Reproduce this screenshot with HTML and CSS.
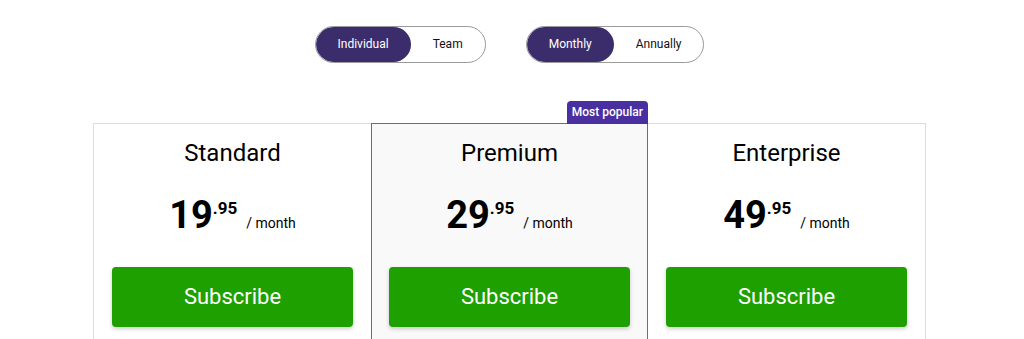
FILE: index.html
```
<!DOCTYPE html>
<html>
	<head>
		<title>Pricing</title>
		<meta charset="UTF-8">
		<meta name="viewport" content="width=device-width, initial-scale=1">
		<link rel="stylesheet" href="styles.css">
	</head>
	<body>
		<div class="page">
			<div class="switches">
				<div class="switch">
					<button class="option active">Individual</button>
					<button class="option">Team</button>
				</div>
				<div class="switch">
					<button class="option active">Monthly</button>
					<button class="option">Annually</button>
				</div>
			</div>
			<div class="plans">
				<div class="plan">
					<div class="plan-name">Standard</div>
					<div class="price"><span class="amount">19</span><sup class="cents">.95</sup><span class="period">/ month</span></div>
					<button class="subscribe">Subscribe</button>
				</div>
				<div class="plan popular">
					<div class="badge">Most popular</div>
					<div class="plan-name">Premium</div>
					<div class="price"><span class="amount">29</span><sup class="cents">.95</sup><span class="period">/ month</span></div>
					<button class="subscribe">Subscribe</button>
				</div>
				<div class="plan">
					<div class="plan-name">Enterprise</div>
					<div class="price"><span class="amount">49</span><sup class="cents">.95</sup><span class="period">/ month</span></div>
					<button class="subscribe">Subscribe</button>
				</div>
			</div>
		</div>
	</body>
</html>
```
FILE: styles.css
```
* {
	box-sizing: border-box;
}
body {
	margin: 0;
	color: #000;
	background: #fff;
	font-family: Roboto, "Liberation Sans", sans-serif;
	overflow: hidden;
}
.page {
	padding: 26px 5px 0 0;
}
.switches {
	display: flex;
	justify-content: center;
	gap: 40px;
}
.switch {
	display: flex;
	border: 1px solid #9a9a9a;
	border-radius: 19px;
	overflow: hidden;
}
.option {
	height: 35px;
	padding: 0 22px 1px;
	border: 0;
	border-radius: 18px;
	background: transparent;
	font-family: inherit;
	font-size: 12px;
	color: #111;
}
.option.active {
	background: #3b2d6b;
	color: #fff;
}
.plans {
	display: grid;
	grid-template-columns: repeat(3, 1fr);
	width: 833px;
	margin: 60px auto 0;
	border: 1px solid #ddd;
	border-bottom: 0;
}
.plan {
	position: relative;
	padding: 14px 18px 19px 18px;
	text-align: center;
}
.popular {
	margin-top: -1px;
	border: 1px solid #6d5dd3;
	padding: 14px 17px 19px 17px;
	background: #f9f9f9;
}
.badge {
	position: absolute;
	right: -1px;
	bottom: 100%;
	height: 23px;
	padding: 0 5px;
	line-height: 23px;
	font-size: 12px;
	font-weight: 500;
	color: #fff;
	background: #4a2fa0;
	border-radius: 4px 4px 0 0;
}
.plan-name {
	font-size: 24px;
	line-height: 30px;
}
.price {
	margin-top: 25px;
	line-height: 44px;
	white-space: nowrap;
}
.amount {
	font-size: 38px;
	font-weight: 700;
}
.cents {
	font-size: 17px;
	font-weight: 700;
	vertical-align: 14px;
	line-height: 0;
}
.period {
	margin-left: 9px;
	font-size: 14px;
}
.subscribe {
	display: block;
	width: 100%;
	height: 60px;
	margin-top: 22px;
	padding-bottom: 2px;
	border: 0;
	border-radius: 4px;
	background: #1da000;
	color: #fff;
	font-family: inherit;
	font-size: 22px;
	box-shadow: 0 2px 4px rgba(0, 0, 0, 0.2);
}
```
